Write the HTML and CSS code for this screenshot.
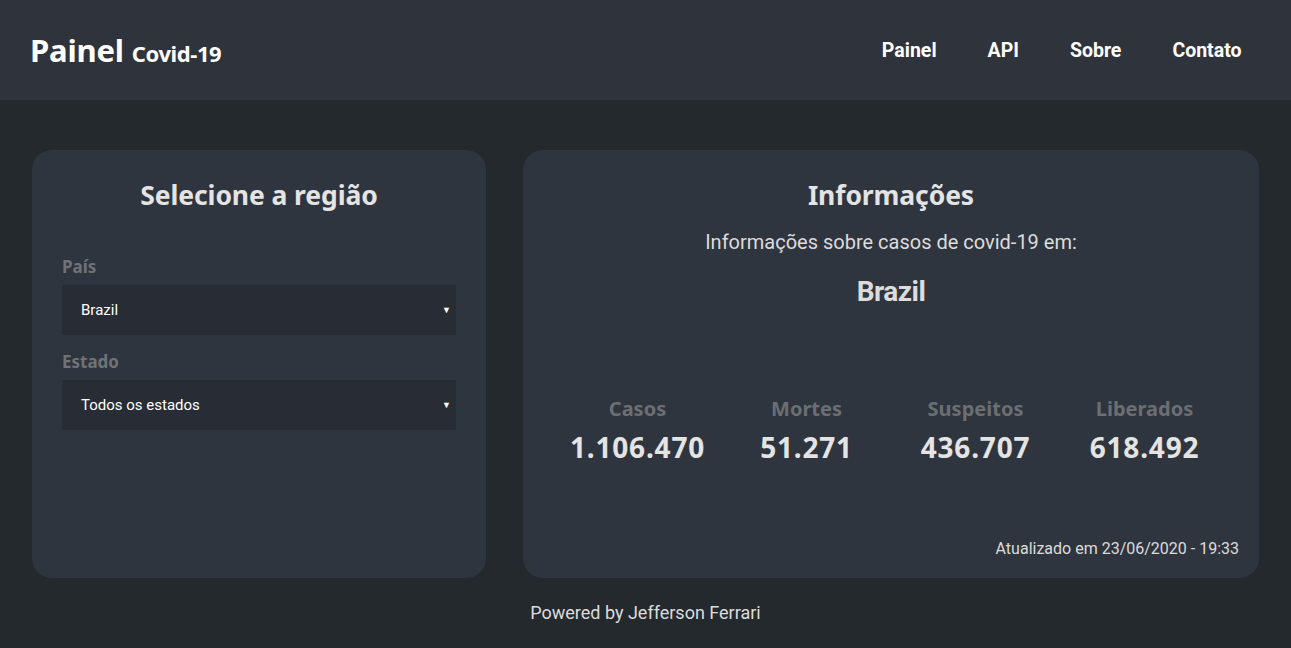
FILE: index.html
```html
<!DOCTYPE html>
<html lang="pt-BR">
<head>
<meta charset="utf-8">
<title>Painel Covid-19</title>
<link rel="stylesheet" href="styles.css">
</head>
<body>
<header class="topbar">
  <div class="brand"><span class="brand-main">Painel</span> <span class="brand-sub">Covid-19</span></div>
  <nav class="nav">
    <a href="#">Painel</a>
    <a href="#">API</a>
    <a href="#">Sobre</a>
    <a href="#">Contato</a>
  </nav>
</header>
<main class="main">
  <section class="card card-left">
    <h2 class="card-title">Selecione a região</h2>
    <div class="field field-first">
      <label class="field-label">País</label>
      <div class="select"><span>Brazil</span><span class="arrow">▼</span></div>
    </div>
    <div class="field">
      <label class="field-label">Estado</label>
      <div class="select"><span>Todos os estados</span><span class="arrow">▼</span></div>
    </div>
  </section>
  <section class="card card-right">
    <h2 class="card-title">Informações</h2>
    <p class="subtitle">Informações sobre casos de covid-19 em:</p>
    <p class="country">Brazil</p>
    <div class="stats">
      <div class="stat"><div class="stat-label">Casos</div><div class="stat-value">1.106.470</div></div>
      <div class="stat"><div class="stat-label">Mortes</div><div class="stat-value">51.271</div></div>
      <div class="stat"><div class="stat-label">Suspeitos</div><div class="stat-value">436.707</div></div>
      <div class="stat"><div class="stat-label">Liberados</div><div class="stat-value">618.492</div></div>
    </div>
    <p class="updated">Atualizado em 23/06/2020 - 19:33</p>
  </section>
</main>
<footer class="footer">Powered by Jefferson Ferrari</footer>
</body>
</html>
```
FILE: styles.css
```css
* { box-sizing: border-box; }
html, body { margin: 0; padding: 0; }
body {
  background: #24292e;
  font-family: Roboto, "Liberation Sans", sans-serif;
  color: #e4e4e4;
  height: 648px;
  overflow: hidden;
}
.topbar {
  height: 100px;
  background: #2f343c;
  display: flex;
  align-items: center;
  justify-content: space-between;
  padding: 0 24px 0 30px;
}
.brand {
  font-family: "Noto Sans", "Open Sans", sans-serif;
  font-weight: 700;
  color: #ffffff;
  display: flex;
  align-items: baseline;
  margin-top: 0;
}
.brand-main { font-size: 31px; letter-spacing: -0.2px; }
.brand-sub { font-size: 22px; margin-left: 8px; letter-spacing: -0.4px; }
.nav { display: flex; }
.nav a {
  color: #ffffff;
  text-decoration: none;
  font-family: Roboto, sans-serif;
  font-weight: 700;
  font-size: 19.5px;
  padding: 0 25.5px;
}
.main {
  display: flex;
  gap: 37px;
  padding: 50px 32px 0 32px;
}
.card {
  background: #2f353e;
  border-radius: 20px;
  height: 428px;
  padding: 29px 30px 30px 30px;
}
.card-left { width: 454px; flex: none; }
.card-right { flex: 1; display: flex; flex-direction: column; padding: 29px 30px 19px 30px; }
.card-title {
  margin: 0;
  text-align: center;
  font-family: "Noto Sans", "Open Sans", sans-serif;
  font-weight: 700;
  font-size: 26.5px;
  line-height: 32px;
  color: #e4e4e4;
  letter-spacing: -0.1px;
}
.field { display: flex; flex-direction: column; }
.field-first { margin-top: 44px; }
.field + .field { margin-top: 15px; }
.field-label {
  font-family: "Noto Sans", "Open Sans", sans-serif;
  font-weight: 700;
  font-size: 17px;
  line-height: 24px;
  color: #6f7276;
  margin-bottom: 6px;
}
.select {
  height: 50px;
  background: #282c34;
  display: flex;
  align-items: center;
  justify-content: space-between;
  padding: 0 5px 0 19px;
  font-size: 15px;
  color: #ffffff;
}
.arrow { font-size: 9px; color: #ffffff; }
.subtitle {
  margin: 18px 0 0 0;
  text-align: center;
  font-size: 20px;
  line-height: 26px;
  color: #dcdcdc;
}
.country {
  margin: 21px 0 0 0;
  text-align: center;
  font-weight: 700;
  font-size: 28px;
  line-height: 32px;
  color: #dcdcdc;
  letter-spacing: -0.5px;
}
.stats {
  display: grid;
  grid-template-columns: repeat(4, 1fr);
  margin-top: 89px;
}
.stat { text-align: center; }
.stat-label {
  font-family: "Noto Sans", "Open Sans", sans-serif;
  font-weight: 700;
  font-size: 20px;
  line-height: 24px;
  color: #6b6e72;
}
.stat-value {
  font-family: "Noto Sans", "Open Sans", sans-serif;
  font-weight: 700;
  font-size: 28px;
  line-height: 34px;
  margin-top: 9px;
  color: #e4e4e4;
  letter-spacing: 0.8px;
}
.updated {
  margin: auto -10px 0 0;
  text-align: right;
  font-size: 16px;
  line-height: 20px;
  color: #dcdcdc;
}
.footer {
  text-align: center;
  font-size: 18px;
  color: #dcdcdc;
  margin-top: 24px;
}
```
